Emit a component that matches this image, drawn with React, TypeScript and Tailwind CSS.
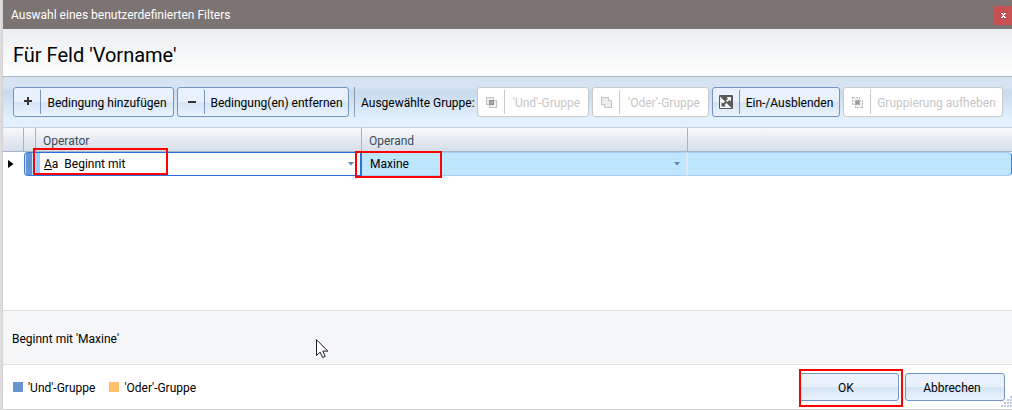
import { useState } from 'react';
import type { ReactNode } from 'react';
import clsx from 'clsx';

function PlusIcon() {
  return (
    <svg width="14" height="14" viewBox="0 0 14 14" shapeRendering="crispEdges">
      <path d="M7 2h2v3h3v2H9v3H7V7H4V5h3z" fill="#333" />
    </svg>
  );
}

function MinusIcon() {
  return (
    <svg width="14" height="14" viewBox="0 0 14 14" shapeRendering="crispEdges">
      <path d="M4 6h8v2H4z" fill="#333" />
    </svg>
  );
}

function AndIcon() {
  return (
    <svg width="14" height="14" viewBox="0 0 14 14" shapeRendering="crispEdges">
      <path d="M2.500 2.500h7v7h-7z" fill="#efefef" stroke="#c4c4c4" />
      <path d="M5.500 5.500h7v7h-7z" fill="#efefef" stroke="#c4c4c4" />
      <path d="M5.500 5.500h4v4h-4z" fill="#a8a8a8" stroke="#919191" />
    </svg>
  );
}

function OrIcon() {
  return (
    <svg width="14" height="14" viewBox="0 0 14 14" shapeRendering="crispEdges">
      <path d="M2.500 2.500h7v3h3v7h-7v-3h-3z" fill="#ececec" stroke="#c4c4c4" />
    </svg>
  );
}

function ToggleIcon() {
  return (
    <svg width="14" height="14" viewBox="0 0 14 14">
      <rect width="14" height="14" rx="1" fill="#595959" />
      <path d="M1 1.500V13h11.500z" fill="#f5f7fb" />
      <path d="M7.500 2H12v4.500l-1.500-1.500L8.500 7 7 5.500l2-2z" fill="#f5f7fb" />
      <path d="M2.500 7v4.500H7L5.500 10l2-2L6 6.500l-2 2z" fill="#595959" />
    </svg>
  );
}

function UngroupIcon() {
  return (
    <svg width="14" height="14" viewBox="0 0 14 14" shapeRendering="crispEdges">
      <path d="M2.500 2.500h7v7h-7z" fill="#f0f0f0" stroke="#bdbdbd" strokeDasharray="2 1" />
      <path d="M5.500 5.500h7v7h-7z" fill="#f0f0f0" stroke="#bdbdbd" strokeDasharray="2 1" />
      <path d="M5.500 5.500h4v4h-4z" fill="#999" stroke="#b0b0b0" />
    </svg>
  );
}

const buttonFace =
  'border-[#7595c0] bg-linear-to-b from-[#e9f1fc] from-50% via-[#d4e4f5] via-50% to-[#eaf3fd] text-black';

function ToolButton({
  icon,
  label,
  className,
  disabled = false,
}: {
  icon: ReactNode;
  label: string;
  className: string;
  disabled?: boolean;
}) {
  return (
    <button
      type="button"
      disabled={disabled}
      className={clsx(
        'flex h-[30px] shrink-0 items-center rounded-[3px] border py-0.5 whitespace-nowrap',
        disabled ? 'border-[#c9c9c9] bg-white text-[#c6c6c6]' : buttonFace,
        className
      )}
    >
      <span
        className={clsx(
          'flex h-6 w-[27px] shrink-0 items-center justify-center border-r',
          disabled ? 'border-[#c9c9c9]' : 'border-[#7595c0]'
        )}
      >
        {icon}
      </span>
      <span className="flex-1 pt-0.5 text-center">{label}</span>
    </button>
  );
}

function DropArrow() {
  return (
    <svg width="6" height="4" viewBox="0 0 6 4" className="pointer-events-none absolute top-[9px] right-1.5">
      <path d="M0 0h6L3 3.500z" fill="#5f83b5" />
    </svg>
  );
}

export default function App() {
  const [operator, setOperator] = useState('Beginnt mit');
  const [operand, setOperand] = useState('Maxine');

  return (
    <div className="relative flex min-h-screen flex-col overflow-hidden bg-linear-to-r from-[#e2e2e2] to-[#d0d0d0] to-[3px] pb-px pl-[3px] font-['Roboto','Open_Sans',sans-serif] text-xs text-black">
      <div className="flex flex-1 flex-col bg-white">
        <header className="flex h-[29px] items-center justify-between bg-[#7b7473] pl-2 text-white">
          <span>Auswahl eines benutzerdefinierten Filters</span>
          <button type="button" aria-label="Schließen" className="mt-0.5 flex h-[19px] w-[18px] items-center justify-center bg-[#c75050]">
            <svg width="5" height="5" viewBox="0 0 5 5" shapeRendering="crispEdges">
              <path d="M0 0h2v1h1V0h2v1H4v1H3v1h1v1h1v1H3V4H2v1H0V4h1V3h1V2H1V1H0z" fill="#fff" />
            </svg>
          </button>
        </header>

        <div className="flex h-[47px] items-center bg-linear-to-b from-[#ebeef0] to-white pt-1 pl-2.5">
          <h1 className="text-xl">Für Feld 'Vorname'</h1>
        </div>

        <div className="flex h-[51px] items-center gap-[3px] border-t border-[#a9b9cb] bg-linear-to-b from-[#d7e3f3] from-20% via-[#c8daed] via-30% to-[#e3f1fe] to-85% pl-2.5">
          <ToolButton icon={<PlusIcon />} label="Bedingung hinzufügen" className="w-[161px]" />
          <ToolButton icon={<MinusIcon />} label="Bedingung(en) entfernen" className="w-[172px]" />
          <div className="ml-0.5 h-[30px] w-px shrink-0 bg-[#8c9db5]" />
          <span className="w-[116px] shrink-0 pt-0.5 pl-[3px] whitespace-nowrap">Ausgewählte Gruppe:</span>
          <ToolButton icon={<AndIcon />} label="'Und'-Gruppe" className="w-28" disabled />
          <ToolButton icon={<OrIcon />} label="'Oder'-Gruppe" className="w-[117px]" disabled />
          <ToolButton icon={<ToggleIcon />} label="Ein-/Ausblenden" className="w-32" />
          <ToolButton icon={<UngroupIcon />} label="Gruppierung aufheben" className="w-40" disabled />
        </div>

        <div className="flex-1">
          <table className="w-full table-fixed border-separate border-spacing-0">
            <colgroup>
              <col className="w-[21px]" />
              <col className="w-3" />
              <col className="w-[326px]" />
              <col className="w-[326px]" />
              <col />
            </colgroup>
            <thead>
              <tr className="h-[25px] bg-linear-to-b from-[#f9fbfc] to-[#d5dde8] text-left text-[#3b4b5a]">
                <th className="border-t border-r border-b border-t-[#cdd3da] border-r-[#a3b5ca] border-b-[#a3b5ca] p-0" />
                <th className="border-t border-r border-b border-t-[#cdd3da] border-r-[#a3b5ca] border-b-[#a3b5ca] p-0" />
                <th className="border-t border-r border-b border-t-[#cdd3da] border-r-[#a3b5ca] border-b-[#a3b5ca] p-0 pt-0.5 pl-[7px] font-normal">Operator</th>
                <th className="border-t border-r border-b border-t-[#cdd3da] border-r-[#a3b5ca] border-b-[#a3b5ca] p-0 pt-0.5 pl-[7px] font-normal">Operand</th>
                <th className="border-t border-b border-t-[#cdd3da] border-b-[#a3b5ca] p-0" />
              </tr>
            </thead>
            <tbody>
              <tr className="h-6">
                <td className="p-0">
                  <svg width="7" height="8" viewBox="0 0 7 8" className="ml-1">
                    <path d="M1 0l5.500 4L1 8z" fill="#000" />
                  </svg>
                </td>
                <td className="rounded-l border border-r-0 border-[#3b80e0] bg-[#bfe6ff] p-0 pl-px">
                  <div className="h-[22px] w-1.5 bg-[#6793cf]" />
                </td>
                <td className="border-y border-r-2 border-[#2770dd] bg-white p-0">
                  <div className="relative flex h-[22px] items-center border-l-4 border-[#9dcdf8] pl-1">
                    <span className="text-xs leading-3">
                      <span className="inline-block h-3 border-b border-black">A</span>a
                    </span>
                    <select
                      aria-label="Operator"
                      value={operator}
                      onChange={(e) => setOperator(e.target.value)}
                      className="h-5 min-w-0 flex-1 appearance-none bg-transparent pl-1.5 outline-none"
                    >
                      <option>Beginnt mit</option>
                      <option>Endet mit</option>
                      <option>Enthält</option>
                    </select>
                    <DropArrow />
                  </div>
                </td>
                <td className="border-y border-r-2 border-y-[#a9cbf1] border-r-[#dfe7f0] bg-[#bfe6ff] p-0">
                  <div className="relative flex h-[22px] items-center">
                    <select
                      aria-label="Operand"
                      value={operand}
                      onChange={(e) => setOperand(e.target.value)}
                      className="h-5 w-full appearance-none bg-transparent pl-2 outline-none"
                    >
                      <option>Maxine</option>
                    </select>
                    <DropArrow />
                  </div>
                </td>
                <td className="rounded-r border border-l-0 border-[#a9cbf1] border-r-[#3b80e0] bg-[#bfe6ff] p-0" />
              </tr>
            </tbody>
          </table>
        </div>

        <div className="flex h-[55px] items-center border-y border-[#dedfe1] bg-[#f5f6f8] pt-0.5 pl-[9px]">
          Beginnt mit 'Maxine'
        </div>

        <footer className="flex h-11 items-center justify-between pr-[7px] pl-2.5">
          <div className="flex items-center gap-3.5">
            <span className="flex items-center gap-[5px]">
              <span className="size-2.5 bg-[#6793cf]" />
              <span className="pt-0.5">'Und'-Gruppe</span>
            </span>
            <span className="flex items-center gap-[5px]">
              <span className="size-2.5 bg-[#ffbe6b]" />
              <span className="pt-0.5">'Oder'-Gruppe</span>
            </span>
          </div>
          <div className="flex gap-1.5">
            <div className="relative">
              <button type="button" className={clsx('h-7 w-[100px] rounded-[3px] border pt-0.5 pr-1.5', buttonFace)}>
                OK
              </button>
              <div className="pointer-events-none absolute -top-1 -right-1 h-[38px] w-[104px] border-2 border-[#f00]" />
            </div>
            <button type="button" className={clsx('h-7 w-[100px] rounded-[3px] border pt-0.5 pr-1.5', buttonFace)}>
              Abbrechen
            </button>
          </div>
        </footer>
      </div>

      {/* Hervorhebungen */}
      <div className="pointer-events-none absolute top-[148px] left-[33px] h-[27px] w-[135px] border-2 border-[#f00]" />
      <div className="pointer-events-none absolute top-[151px] left-[355px] h-[27px] w-[87px] border-2 border-[#f00]" />

      <svg width="13" height="20" viewBox="0 0 13 20" className="pointer-events-none absolute top-[339px] left-[316px]">
        <path d="M.5.800v15.700l3.700-3.400 2.400 5.400 2.600-1.100-2.400-5.300h5.100z" fill="#fff" stroke="#1a1a2a" />
      </svg>

      <svg width="11" height="11" viewBox="0 0 11 11" shapeRendering="crispEdges" className="pointer-events-none absolute right-0 bottom-[3px]">
        <path
          d="M9 0h2v2H9zM6 3h2v2H6zM9 3h2v2H9zM3 6h2v2H3zM6 6h2v2H6zM9 6h2v2H9zM0 9h2v2H0zM3 9h2v2H3zM6 9h2v2H6zM9 9h2v2H9z"
          fill="#bfc7d8"
        />
      </svg>
    </div>
  );
}
